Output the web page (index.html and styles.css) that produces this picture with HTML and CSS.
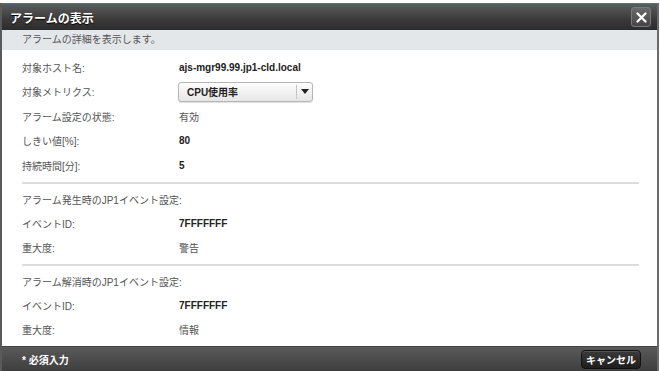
FILE: index.html
```html
<!DOCTYPE html>
<html lang="ja">
<head>
  <meta charset="UTF-8">
  <meta name="viewport" content="width=device-width, initial-scale=1">
  <title>アラームの表示</title>
  <link rel="stylesheet" href="styles.css">
</head>
<body>

  <div class="dialog">
    <div class="dialog-title">
      <h2>アラームの表示</h2>
      <button class="close-btn" type="button" aria-label="閉じる">
        <svg width="11" height="11" viewBox="0 0 11 11">
          <path d="M1.5 1.5 L9.5 9.5 M9.5 1.5 L1.5 9.5" stroke="#fff" stroke-width="2.2" stroke-linecap="round"/>
        </svg>
      </button>
    </div>
    <div class="dialog-desc">アラームの詳細を表示します。</div>

    <div class="dialog-body">
      <div class="section">
        <div class="row">
          <span class="label">対象ホスト名:</span>
          <span class="value strong">ajs-mgr99.99.jp1-cld.local</span>
        </div>
        <div class="row">
          <span class="label">対象メトリクス:</span>
          <div class="select">
            <span class="select-text">CPU使用率</span>
            <span class="select-arrow">
              <svg width="8" height="5" viewBox="0 0 8 5"><path d="M0 0 H8 L4 5 Z" fill="#222"/></svg>
            </span>
          </div>
        </div>
        <div class="row">
          <span class="label">アラーム設定の状態:</span>
          <span class="value">有効</span>
        </div>
        <div class="row">
          <span class="label">しきい値[%]:</span>
          <span class="value strong">80</span>
        </div>
        <div class="row">
          <span class="label">持続時間[分]:</span>
          <span class="value strong">5</span>
        </div>
      </div>

      <div class="section section-event">
        <div class="row">
          <span class="label wide">アラーム発生時のJP1イベント設定:</span>
        </div>
        <div class="row">
          <span class="label">イベントID:</span>
          <span class="value strong">7FFFFFFF</span>
        </div>
        <div class="row">
          <span class="label">重大度:</span>
          <span class="value">警告</span>
        </div>
      </div>

      <div class="section section-event">
        <div class="row">
          <span class="label wide">アラーム解消時のJP1イベント設定:</span>
        </div>
        <div class="row">
          <span class="label">イベントID:</span>
          <span class="value strong">7FFFFFFF</span>
        </div>
        <div class="row">
          <span class="label">重大度:</span>
          <span class="value">情報</span>
        </div>
      </div>
    </div>

    <div class="dialog-footer">
      <span class="required">* 必須入力</span>
      <button class="cancel-btn" type="button">キャンセル</button>
    </div>
  </div>

</body>
</html>
```

FILE: styles.css
```css
* {
  box-sizing: border-box;
}

body {
  margin: 0;
  background-color: #fff;
  font-family: "Liberation Sans", "Noto Sans CJK JP", sans-serif;
  font-size: 10px;
  color: #555;
}

.dialog {
  width: 659px;
  height: 368px;
  margin-top: 3px;
  border-left: 2px solid #5a5a5a;
  border-right: 2px solid #6a6a6a;
  display: flex;
  flex-direction: column;
  background-color: #fff;
}

.dialog-title {
  height: 27px;
  border-top: 1px solid #1f7fd4;
  background: linear-gradient(#5c5c5c, #3a3a3a 60%, #2c2c2c);
  display: flex;
  align-items: center;
  justify-content: space-between;
  padding: 0 6px 0 8px;
}

.dialog-title h2 {
  margin: 0;
  font-size: 12px;
  font-weight: bold;
  color: #fff;
  text-shadow: 0 1px 1px #000;
}

.close-btn {
  width: 20px;
  height: 20px;
  padding: 0;
  border: 1px solid #7a7a7a;
  border-radius: 3px;
  background: linear-gradient(#6a6a6a, #454545);
  display: flex;
  align-items: center;
  justify-content: center;
}

.dialog-desc {
  height: 20px;
  line-height: 20px;
  padding-left: 20px;
  background-color: #e4e7ea;
  color: #555;
}

.dialog-body {
  flex: 1;
  padding: 5px 18px 0 20px;
}

.section .row {
  height: 24.5px;
}

.section-event {
  border-top: 2px solid #dcdcdc;
  margin-top: 4px;
  padding-top: 4px;
}

.section-event .row {
  height: 24px;
}

.row {
  display: flex;
  align-items: center;
}

.label {
  width: 157px;
  flex-shrink: 0;
  color: #555;
}

.label.wide {
  width: auto;
}

.value {
  color: #555;
}

.value.strong {
  color: #222;
  font-weight: bold;
}

.select {
  width: 135px;
  height: 20px;
  margin-left: -1px;
  border: 1px solid #b5b5b5;
  border-radius: 3px;
  background: linear-gradient(#fdfdfd, #e6e6e6);
  box-shadow: 0 1px 1px rgba(0,0,0,0.12);
  display: flex;
  align-items: center;
}

.select-text {
  flex: 1;
  padding-left: 8px;
  font-weight: bold;
  color: #222;
}

.select-arrow {
  width: 16px;
  height: 14px;
  border-left: 1px solid #c4c4c4;
  display: flex;
  align-items: center;
  justify-content: center;
}

.dialog-footer {
  height: 25px;
  background: linear-gradient(#5a5a5a, #3e3e3e);
  border-top: 1px solid #444;
  display: flex;
  align-items: center;
  justify-content: space-between;
  padding: 0 16px 0 20px;
}

.required {
  color: #fff;
  font-weight: bold;
}

.cancel-btn {
  height: 19px;
  width: 60px;
  padding: 0;
  border: 1px solid #111;
  border-radius: 4px;
  background: linear-gradient(#3a3a3a, #1e1e1e);
  box-shadow: inset 0 1px 0 #555;
  color: #fff;
  font-family: "Liberation Sans", "Noto Sans CJK JP", sans-serif;
  font-size: 10px;
  font-weight: bold;
}
```
